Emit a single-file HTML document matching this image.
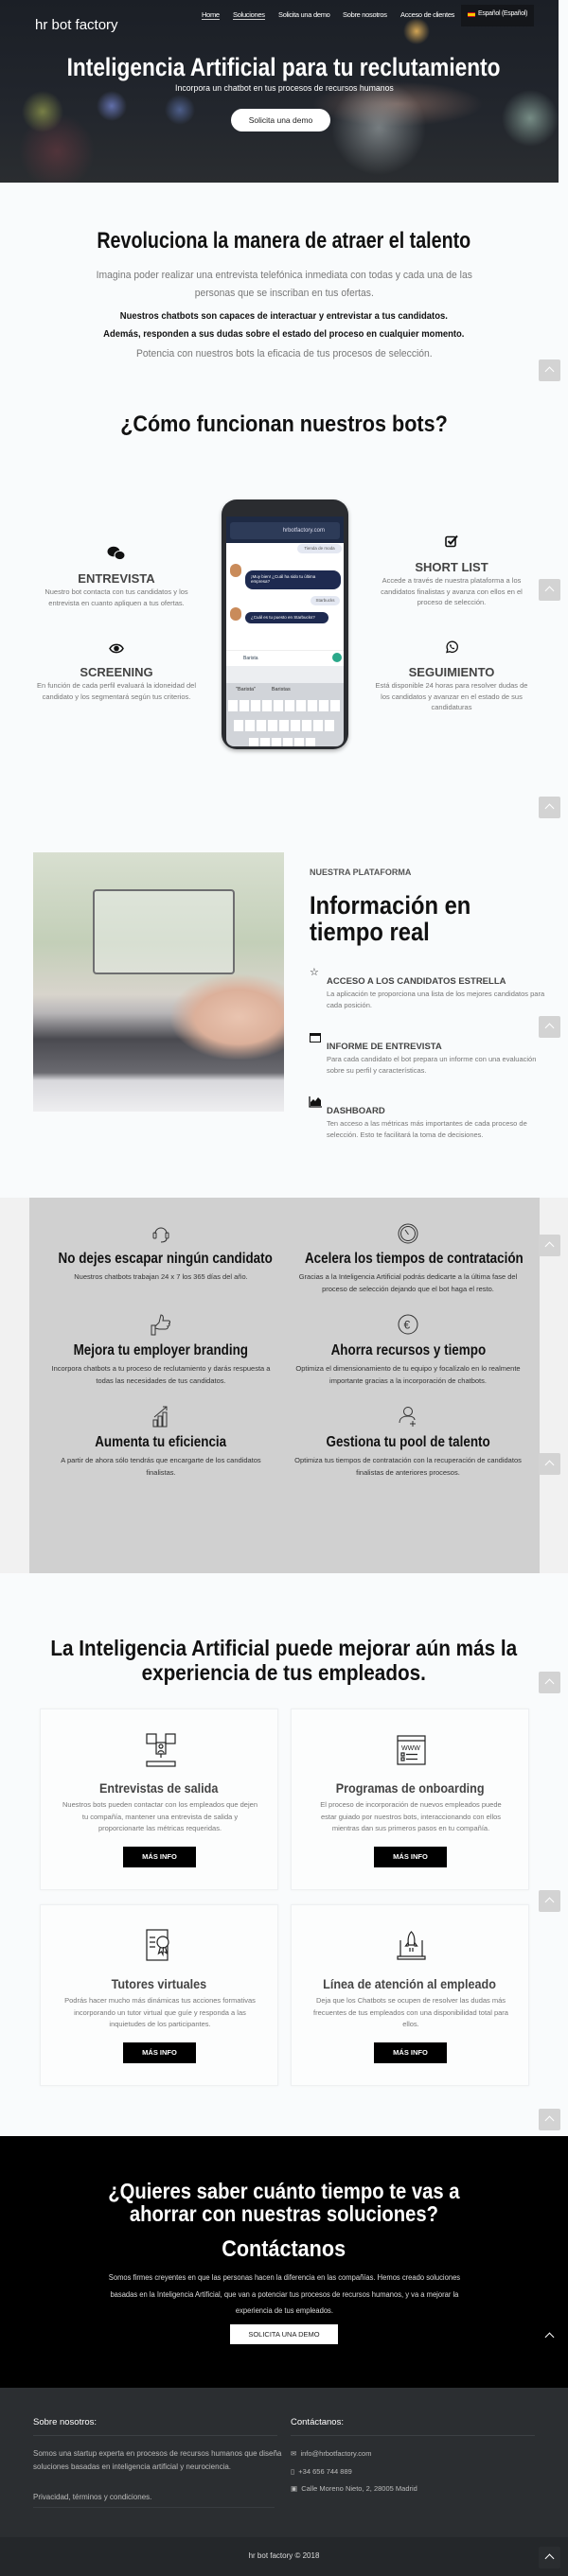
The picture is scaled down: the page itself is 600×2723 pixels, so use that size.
<!DOCTYPE html>
<html><head><meta charset="utf-8">
<style>
*{margin:0;padding:0;box-sizing:border-box}
body{width:600px;height:2723px;position:relative;background:#f9fbfc;font-family:"Liberation Sans",Arial,sans-serif;overflow:hidden;color:#222}
.a{position:absolute}
.c{position:absolute;left:0;width:600px;text-align:center;white-space:nowrap}
.sx{display:inline-block;transform:scaleX(.82);transform-origin:center}
.up{position:absolute;left:569px;width:23px;height:23px;background:#d3d3d3;border-radius:2px}
.up:after{content:"";position:absolute;left:8px;top:9px;width:6px;height:6px;border-left:1.5px solid #fff;border-top:1.5px solid #fff;transform:rotate(45deg)}
.nav{position:absolute;top:11px;color:#fff;font-size:7.5px;white-space:nowrap;letter-spacing:-.3px}
.ft{font-size:13px;font-weight:bold;color:#444;text-align:center}
.fd{font-size:7.5px;color:#777;line-height:11.5px;text-align:center}
.gt{font-size:16px;font-weight:bold;color:#111;text-align:center;white-space:nowrap}
.gt span{display:inline-block;transform:scaleX(.84);transform-origin:center}
.gd{font-size:7.5px;color:#333;line-height:12.5px;text-align:center}
.card{position:absolute;width:252px;height:192px;background:#fcfdfd;border:1px solid #eef0f2;box-shadow:0 0 3px rgba(0,0,0,.04);text-align:center}
.card h3{position:absolute;top:75px;left:0;width:100%;font-size:14px;color:#444}
.card h3 span{display:inline-block;transform:scaleX(.9)}
.card p{position:absolute;top:95px;left:22px;width:208px;font-size:7.5px;color:#777;line-height:12.5px}
.card b.btn{position:absolute;left:87px;top:145px;width:77px;height:22px;background:#000;color:#fff;font-size:7.5px;line-height:22px}
.pi{position:absolute;left:345px;width:250px}
.pi h4{font-size:9.5px;color:#444}
.pi p{font-size:7.5px;color:#777;line-height:11.5px;margin-top:2px}
</style></head><body>

<!-- HERO -->
<div class="a" style="left:0;top:0;width:590px;height:193px;background:
radial-gradient(circle at 45px 118px,rgba(190,200,90,.55) 0,rgba(190,200,90,0) 22px),
radial-gradient(circle at 118px 112px,rgba(140,160,255,.6) 0,rgba(140,160,255,0) 16px),
radial-gradient(circle at 190px 116px,rgba(120,150,230,.5) 0,rgba(120,150,230,0) 16px),
radial-gradient(circle at 440px 33px,rgba(230,180,90,.9) 0,rgba(230,180,90,0) 14px),
radial-gradient(circle at 560px 125px,rgba(200,240,220,.5) 0,rgba(200,240,220,0) 30px),
radial-gradient(circle at 400px 135px,rgba(220,230,230,.45) 0,rgba(220,230,230,0) 50px),
radial-gradient(ellipse at 420px 110px,rgba(200,150,130,.45) 0,rgba(200,150,130,0) 90px),
radial-gradient(circle at 60px 160px,rgba(160,70,80,.35) 0,rgba(160,70,80,0) 40px),
linear-gradient(180deg,#1b1f26 0,#22262d 60%,#2a2d30 100%)"></div>
<div class="a" style="left:37px;top:18px;color:#fff;font-size:15px">hr bot factory</div>
<div class="nav" style="left:213px;border-bottom:1px solid #ccc">Home</div>
<div class="nav" style="left:246px;border-bottom:1px solid #ccc">Soluciones</div>
<div class="nav" style="left:294px">Solicita una demo</div>
<div class="nav" style="left:362px">Sobre nosotros</div>
<div class="nav" style="left:423px">Acceso de clientes</div>
<div class="a" style="left:487px;top:5px;width:77px;height:23px;background:#14161a"></div>
<div class="a" style="left:494px;top:13px;width:8px;height:5px;background:#c60b1e;border-top:1.3px solid #c60b1e"><div style="height:2.5px;background:#ffc400"></div></div>
<div class="nav" style="left:505px;top:11px;font-size:7px">Español (Español)</div>
<div class="c" style="top:56px;color:#fff;font-size:27px;font-weight:bold"><span class="sx" style="transform:scaleX(.84)">Inteligencia Artificial para tu reclutamiento</span></div>
<div class="c" style="top:88px;color:#fff;font-size:9.5px"><span class="sx" style="transform:scaleX(.92)">Incorpora un chatbot en tus procesos de recursos humanos</span></div>
<div class="a" style="left:244px;top:115px;width:105px;height:24px;background:#fff;border-radius:12px;text-align:center;line-height:24px;font-size:8.5px;color:#222">Solicita una demo</div>

<!-- REVOLUCIONA -->
<div class="c" style="top:241px;font-size:24px;font-weight:bold;color:#111"><span class="sx">Revoluciona la manera de atraer el talento</span></div>
<div class="c" style="top:282px;font-size:11px;color:#777;line-height:19px"><span class="sx" style="transform:scaleX(.94)">Imagina poder realizar una entrevista telefónica inmediata con todas y cada una de las<br>personas que se inscriban en tus ofertas.</span></div>
<div class="c" style="top:325px;font-size:10.5px;color:#111;font-weight:bold;line-height:19px"><span class="sx" style="transform:scaleX(.9)">Nuestros chatbots son capaces de interactuar y entrevistar a tus candidatos.<br>Además, responden a sus dudas sobre el estado del proceso en cualquier momento.</span></div>
<div class="c" style="top:368px;font-size:11px;color:#777"><span class="sx" style="transform:scaleX(.94)">Potencia con nuestros bots la eficacia de tus procesos de selección.</span></div>

<div class="c" style="top:435px;font-size:24px;font-weight:bold;color:#111"><span class="sx" style="transform:scaleX(.9)">¿Cómo funcionan nuestros bots?</span></div>

<!-- features -->
<svg class="a" style="left:113px;top:577px" width="20" height="16" viewBox="0 0 20 16"><ellipse cx="7" cy="6" rx="6.5" ry="5.3" fill="#111"/><ellipse cx="13.5" cy="10" rx="5.5" ry="4.6" fill="#111" stroke="#f9fbfc" stroke-width="1"/></svg>
<div class="a ft" style="left:23px;top:604px;width:200px">ENTREVISTA</div>
<div class="a fd" style="left:23px;top:620px;width:200px">Nuestro bot contacta con tus candidatos y los<br>entrevista en cuanto apliquen a tus ofertas.</div>
<svg class="a" style="left:115px;top:680px" width="16" height="11" viewBox="0 0 16 11"><path d="M1 5.5C4 0 12 0 15 5.5 12 11 4 11 1 5.5Z" fill="none" stroke="#111" stroke-width="1.5"/><circle cx="8" cy="5.5" r="2.8" fill="#111"/></svg>
<div class="a ft" style="left:23px;top:703px;width:200px">SCREENING</div>
<div class="a fd" style="left:13px;top:719px;width:220px">En función de cada perfil evaluará la idoneidad del<br>candidato y los segmentará según tus criterios.</div>

<svg class="a" style="left:470px;top:565px" width="14" height="14" viewBox="0 0 14 14"><rect x="1" y="2.5" width="10" height="10" rx="1.5" fill="none" stroke="#111" stroke-width="1.6"/><path d="M3.5 7l2.5 2.5L13 1.5" fill="none" stroke="#111" stroke-width="2"/></svg>
<div class="a ft" style="left:377px;top:592px;width:200px">SHORT LIST</div>
<div class="a fd" style="left:367px;top:608px;width:220px">Accede a través de nuestra plataforma a los<br>candidatos finalistas y avanza con ellos en el<br>proceso de selección.</div>
<svg class="a" style="left:470px;top:677px" width="14" height="14" viewBox="0 0 14 14"><path d="M2 12.5l.8-3A5.6 5.6 0 1 1 5 11.7Z" fill="none" stroke="#111" stroke-width="1.3"/><path d="M5 4.5c0 2 2 4.5 4.5 4.8l.8-1-1.3-.8-.6.5c-.8-.4-1.5-1.1-1.9-1.9l.5-.6-.8-1.3Z" fill="#111"/></svg>
<div class="a ft" style="left:377px;top:703px;width:200px">SEGUIMIENTO</div>
<div class="a fd" style="left:367px;top:719px;width:220px">Está disponible 24 horas para resolver dudas de<br>los candidatos y avanzar en el estado de sus<br>candidaturas</div>

<!-- phone -->
<div class="a" style="left:234px;top:528px;width:134px;height:264px;background:#2a2c30;border-radius:16px;box-shadow:0 2px 4px rgba(0,0,0,.3)"></div>
<div class="a" style="left:239px;top:546px;width:124px;height:28px;background:#1e2a44"></div>
<div class="a" style="left:243px;top:552px;width:116px;height:18px;background:#2d3b58;border-radius:3px;color:#dde;font-size:6px;line-height:18px;text-align:right;padding-right:16px">hrbotfactory.com</div>
<div class="a" style="left:239px;top:574px;width:124px;height:113px;background:#fff"></div>
<div class="a" style="left:314px;top:575px;width:47px;height:10px;background:#e4e8f2;border-radius:5px;font-size:4.5px;line-height:10px;text-align:center;color:#555">Tienda de moda</div>
<div class="a" style="left:243px;top:596px;width:12px;height:14px;background:#c98b5a;border-radius:6px"></div>
<div class="a" style="left:259px;top:603px;width:101px;height:20px;background:#1e2a50;border-radius:8px;color:#fff;font-size:4.5px;padding:4px 6px">¡Muy bien! ¿Cuál ha sido tu última empresa?</div>
<div class="a" style="left:328px;top:630px;width:31px;height:10px;background:#e4e8f2;border-radius:5px;font-size:4.5px;line-height:10px;text-align:center;color:#555">Starbucks</div>
<div class="a" style="left:243px;top:642px;width:12px;height:14px;background:#c98b5a;border-radius:6px"></div>
<div class="a" style="left:259px;top:647px;width:88px;height:12px;background:#1e2a50;border-radius:6px;color:#fff;font-size:4.5px;line-height:12px;padding-left:6px">¿Cuál es tu puesto en Starbucks?</div>
<div class="a" style="left:239px;top:687px;width:124px;height:17px;background:#fff;border-top:1px solid #eee;font-size:5px;line-height:17px;padding-left:18px;color:#345">Barista</div>
<div class="a" style="left:351px;top:690px;width:10px;height:10px;background:#2aa88a;border-radius:5px"></div>
<div class="a" style="left:239px;top:704px;width:124px;height:18px;background:#eceef1"></div>
<div class="a" style="left:239px;top:722px;width:124px;height:67px;background:#d1d4d9;border-radius:0 0 8px 8px"></div>
<div class="a" style="left:239px;top:726px;width:124px;font-size:5.5px;color:#333;padding-left:10px">"Barista"&nbsp;&nbsp;&nbsp;&nbsp;&nbsp;&nbsp;&nbsp;&nbsp;&nbsp;&nbsp;&nbsp;Baristas</div>
<div class="a" style="left:241px;top:740px;width:120px;height:12px;background:repeating-linear-gradient(90deg,#fff 0,#fff 10px,transparent 10px,transparent 12px)"></div>
<div class="a" style="left:247px;top:761px;width:108px;height:12px;background:repeating-linear-gradient(90deg,#fff 0,#fff 10px,transparent 10px,transparent 12px)"></div>
<div class="a" style="left:263px;top:780px;width:72px;height:9px;background:repeating-linear-gradient(90deg,#fff 0,#fff 10px,transparent 10px,transparent 12px)"></div>

<!-- platform -->
<div class="a" style="left:35px;top:901px;width:265px;height:274px;background:linear-gradient(180deg,#d8dfd0 0,#c3cfb8 35%,#d8d4cc 55%,#b8b6b8 62%,#4a4a50 72%,#6a6a70 85%,#d8d8dc 88%,#eeeef0 100%)"></div>
<div class="a" style="left:180px;top:1030px;width:120px;height:90px;background:radial-gradient(ellipse at 60% 50%,#e9c4b0 0,#dcb09a 45%,rgba(220,176,154,0) 72%)"></div>
<div class="a" style="left:98px;top:940px;width:150px;height:90px;border:2px solid #6e6e70;border-radius:4px;background:rgba(235,240,235,.5)"></div>
<div class="a" style="left:327px;top:917px;font-size:9px;font-weight:bold;color:#555">NUESTRA PLATAFORMA</div>
<div class="a" style="left:327px;top:943px;font-size:27px;font-weight:bold;color:#111;line-height:28px;white-space:nowrap"><span style="display:inline-block;transform:scaleX(.88);transform-origin:left">Información en<br>tiempo real</span></div>
<div class="a" style="left:327px;top:1021px;font-size:11px;color:#111">☆</div>
<div class="pi" style="top:1032px"><h4>ACCESO A LOS CANDIDATOS ESTRELLA</h4><p>La aplicación te proporciona una lista de los mejores candidatos para<br>cada posición.</p></div>
<div class="a" style="left:327px;top:1092px;width:12px;height:10px;border:1.5px solid #111;border-top-width:3px"></div>
<div class="pi" style="top:1101px"><h4>INFORME DE ENTREVISTA</h4><p>Para cada candidato el bot prepara un informe con una evaluación<br>sobre su perfil y características.</p></div>
<svg class="a" style="left:326px;top:1159px" width="14" height="12" viewBox="0 0 14 12"><path d="M1 0v11h13" fill="none" stroke="#111" stroke-width="1.3"/><path d="M2 10V6l3-3 2 2 3-4 3 3v6Z" fill="#111"/></svg>
<div class="pi" style="top:1169px"><h4>DASHBOARD</h4><p>Ten acceso a las métricas más importantes de cada proceso de<br>selección. Esto te facilitará la toma de decisiones.</p></div>

<!-- gray benefits -->
<div class="a" style="left:0;top:1266px;width:600px;height:397px;background:#f1f1f1"></div>
<div class="a" style="left:31px;top:1266px;width:539px;height:397px;background:#d0d0d0"></div>
<svg class="a" style="left:160px;top:1293px" width="20" height="22" viewBox="0 0 20 22" fill="none" stroke="#333" stroke-width="1"><path d="M4 11a6 6 0 0 1 12 0"/><rect x="2" y="10" width="3" height="6" rx="1"/><rect x="15" y="10" width="3" height="6" rx="1"/><path d="M16 16c0 3-3 4-6 4"/></svg>
<div class="a gt" style="left:40px;top:1322px;width:260px"><span>No dejes escapar ningún candidato</span></div>
<div class="a gd" style="left:40px;top:1344px;width:260px">Nuestros chatbots trabajan 24 x 7 los 365 días del año.</div>
<svg class="a" style="left:420px;top:1293px" width="22" height="22" viewBox="0 0 22 22" fill="none" stroke="#333" stroke-width="1"><circle cx="11" cy="11" r="10"/><circle cx="11" cy="11" r="7.5"/><path d="M8 7l3.5 5"/></svg>
<div class="a gt" style="left:300px;top:1322px;width:262px"><span>Acelera los tiempos de contratación</span></div>
<div class="a gd" style="left:300px;top:1344px;width:262px">Gracias a la Inteligencia Artificial podrás dedicarte a la última fase del<br>proceso de selección dejando que el bot haga el resto.</div>
<svg class="a" style="left:159px;top:1389px" width="22" height="24" viewBox="0 0 22 24" fill="none" stroke="#333" stroke-width="1"><rect x="1" y="12" width="4" height="10"/><path d="M5 13l4-4 2-8c2 0 3 2 2 6h6c2 0 2 3 0 3 2 1 1 3-1 3 1 1 0 3-2 3h-7l-4-1"/></svg>
<div class="a gt" style="left:40px;top:1419px;width:260px"><span>Mejora tu employer branding</span></div>
<div class="a gd" style="left:40px;top:1441px;width:260px">Incorpora chatbots a tu proceso de reclutamiento y darás respuesta a<br>todas las necesidades de tus candidatos.</div>
<svg class="a" style="left:420px;top:1389px" width="22" height="22" viewBox="0 0 22 22" fill="none" stroke="#333" stroke-width="1"><circle cx="11" cy="11" r="10"/><text x="6.5" y="15.5" font-size="12" fill="#333" stroke="none" font-family="Liberation Sans">€</text></svg>
<div class="a gt" style="left:300px;top:1419px;width:262px"><span>Ahorra recursos y tiempo</span></div>
<div class="a gd" style="left:300px;top:1441px;width:262px">Optimiza el dimensionamiento de tu equipo y focalízalo en lo realmente<br>importante gracias a la incorporación de chatbots.</div>
<svg class="a" style="left:160px;top:1485px" width="20" height="24" viewBox="0 0 20 24" fill="none" stroke="#333" stroke-width="1"><rect x="2" y="16" width="4" height="7"/><rect x="7" y="12" width="4" height="11"/><rect x="12" y="8" width="4" height="15"/><path d="M3 13L16 2m-4 0h4v4"/></svg>
<div class="a gt" style="left:40px;top:1516px;width:260px"><span>Aumenta tu eficiencia</span></div>
<div class="a gd" style="left:40px;top:1538px;width:260px">A partir de ahora sólo tendrás que encargarte de los candidatos<br>finalistas.</div>
<svg class="a" style="left:420px;top:1485px" width="22" height="24" viewBox="0 0 22 24" fill="none" stroke="#333" stroke-width="1"><circle cx="11" cy="7" r="4.5"/><path d="M2 19c0-5 4-7 9-7s7 2 7 4M16 17v6M13 20h6"/></svg>
<div class="a gt" style="left:300px;top:1516px;width:262px"><span>Gestiona tu pool de talento</span></div>
<div class="a gd" style="left:300px;top:1538px;width:262px">Optimiza tus tiempos de contratación con la recuperación de candidatos<br>finalistas de anteriores procesos.</div>

<!-- employees -->
<div class="c" style="top:1729px;font-size:23px;font-weight:bold;color:#111;line-height:26px"><span class="sx" style="transform:scaleX(.9)">La Inteligencia Artificial puede mejorar aún más la<br>experiencia de tus empleados.</span></div>

<div class="card" style="left:42px;top:1806px">
<svg style="position:absolute;left:111px;top:25px" width="32" height="36" viewBox="0 0 32 36" fill="none" stroke="#222" stroke-width="1.2"><rect x="1" y="1" width="10" height="10"/><rect x="21" y="1" width="10" height="10"/><rect x="11" y="10" width="10" height="12"/><circle cx="16" cy="14" r="2"/><path d="M13 21c0-3 6-3 6 0M16 22v4"/><rect x="1" y="30" width="30" height="5"/></svg>
<h3><span>Entrevistas de salida</span></h3><p>Nuestros bots pueden contactar con los empleados que dejen tu compañía, mantener una entrevista de salida y proporcionarte las métricas requeridas.</p><b class="btn">MÁS INFO</b></div>
<div class="card" style="left:307px;top:1806px">
<svg style="position:absolute;left:111px;top:27px" width="31" height="32" viewBox="0 0 31 32" fill="none" stroke="#222" stroke-width="1.2"><rect x="1" y="1" width="29" height="30"/><path d="M1 6h29"/><text x="5" y="16" font-size="7" fill="#222" stroke="none" font-family="Liberation Sans">WWW</text><rect x="5" y="19" width="3" height="3"/><rect x="5" y="24" width="3" height="3"/><path d="M10 20.5h12M10 25.5h12"/></svg>
<h3><span>Programas de onboarding</span></h3><p>El proceso de incorporación de nuevos empleados puede estar guiado por nuestros bots, interaccionando con ellos mientras dan sus primeros pasos en tu compañía.</p><b class="btn">MÁS INFO</b></div>
<div class="card" style="left:42px;top:2013px">
<svg style="position:absolute;left:111px;top:25px" width="28" height="34" viewBox="0 0 28 34" fill="none" stroke="#222" stroke-width="1.2"><rect x="1" y="1" width="22" height="32"/><circle cx="18" cy="14" r="6" fill="#fcfdfd"/><path d="M15.5 19l-2 7 3-2 1.5 3 .5-8M20.5 19l2 7-3-2"/><path d="M4 9h6M4 14h6M4 19h6"/></svg>
<h3><span>Tutores virtuales</span></h3><p>Podrás hacer mucho más dinámicas tus acciones formativas incorporando un tutor virtual que guíe y responda a las inquietudes de los participantes.</p><b class="btn">MÁS INFO</b></div>
<div class="card" style="left:307px;top:2013px">
<svg style="position:absolute;left:111px;top:25px" width="31" height="34" viewBox="0 0 31 34" fill="none" stroke="#222" stroke-width="1.2"><path d="M4 12v17h23V12M1 29h29v3H1z"/><path d="M15.5 3c3 3 4 8 3 14h-6c-1-6 0-11 3-14zM12.5 14l-3 4h3M18.5 14l3 4h-3M14 20v4M17 20v4"/></svg>
<h3><span>Línea de atención al empleado</span></h3><p>Deja que los Chatbots se ocupen de resolver las dudas más frecuentes de tus empleados con una disponibilidad total para ellos.</p><b class="btn">MÁS INFO</b></div>

<!-- black contact -->
<div class="a" style="left:0;top:2258px;width:600px;height:266px;background:#000"></div>
<div class="c" style="top:2304px;color:#fff;font-size:23px;font-weight:bold;line-height:24px"><span class="sx" style="transform:scaleX(.88)">¿Quieres saber cuánto tiempo te vas a<br>ahorrar con nuestras soluciones?</span></div>
<div class="c" style="top:2364px;color:#fff;font-size:24px;font-weight:bold"><span class="sx" style="transform:scaleX(.9)">Contáctanos</span></div>
<div class="c" style="top:2399px;color:#ddd;font-size:8px;line-height:17.5px"><span class="sx" style="transform:scaleX(.95)">Somos firmes creyentes en que las personas hacen la diferencia en las compañías. Hemos creado soluciones<br>basadas en la Inteligencia Artificial, que van a potenciar tus procesos de recursos humanos, y va a mejorar la<br>experiencia de tus empleados.</span></div>
<div class="a" style="left:243px;top:2457px;width:114px;height:21px;background:#fff;text-align:center;line-height:21px;font-size:7.5px;color:#222">SOLICITA UNA DEMO</div>

<!-- footer -->
<div class="a" style="left:0;top:2524px;width:600px;height:158px;background:#2b2e31"></div>
<div class="a" style="left:0;top:2682px;width:600px;height:41px;background:#24272a"></div>
<div class="a" style="left:35px;top:2555px;color:#fff;font-size:9.5px">Sobre nosotros:</div>
<div class="a" style="left:35px;top:2574px;width:258px;height:1px;background:#3c4044"></div>
<div class="a" style="left:35px;top:2587px;color:#bbb;font-size:8px;line-height:13.5px">Somos una startup experta en procesos de recursos humanos que diseña<br>soluciones basadas en inteligencia artificial y neurociencia.</div>
<div class="a" style="left:35px;top:2635px;color:#bbb;font-size:8px">Privacidad, términos y condiciones.</div>
<div class="a" style="left:35px;top:2650px;width:255px;height:1px;background:#383c40"></div>
<div class="a" style="left:307px;top:2555px;color:#fff;font-size:9.5px">Contáctanos:</div>
<div class="a" style="left:307px;top:2574px;width:258px;height:1px;background:#3c4044"></div>
<div class="a" style="left:307px;top:2589px;color:#bbb;font-size:7.5px">✉&nbsp; info@hrbotfactory.com</div>
<div class="a" style="left:307px;top:2608px;color:#bbb;font-size:7.5px">▯&nbsp; +34 656 744 889</div>
<div class="a" style="left:307px;top:2626px;color:#bbb;font-size:7.5px">▣&nbsp; Calle Moreno Nieto, 2, 28005 Madrid</div>
<div class="c" style="top:2697px;color:#ddd;font-size:8px">hr bot factory © 2018</div>

<!-- scroll-up buttons -->
<div class="up" style="top:380px"></div>
<div class="up" style="top:612px"></div>
<div class="up" style="top:842px"></div>
<div class="up" style="top:1074px"></div>
<div class="up" style="top:1305px"></div>
<div class="up" style="top:1536px"></div>
<div class="up" style="top:1767px"></div>
<div class="up" style="top:1998px"></div>
<div class="up" style="top:2229px"></div>
<div class="up" style="top:2458px;background:#000"></div>
<div class="up" style="top:2692px;background:#2a2d30"></div>
</body></html>
